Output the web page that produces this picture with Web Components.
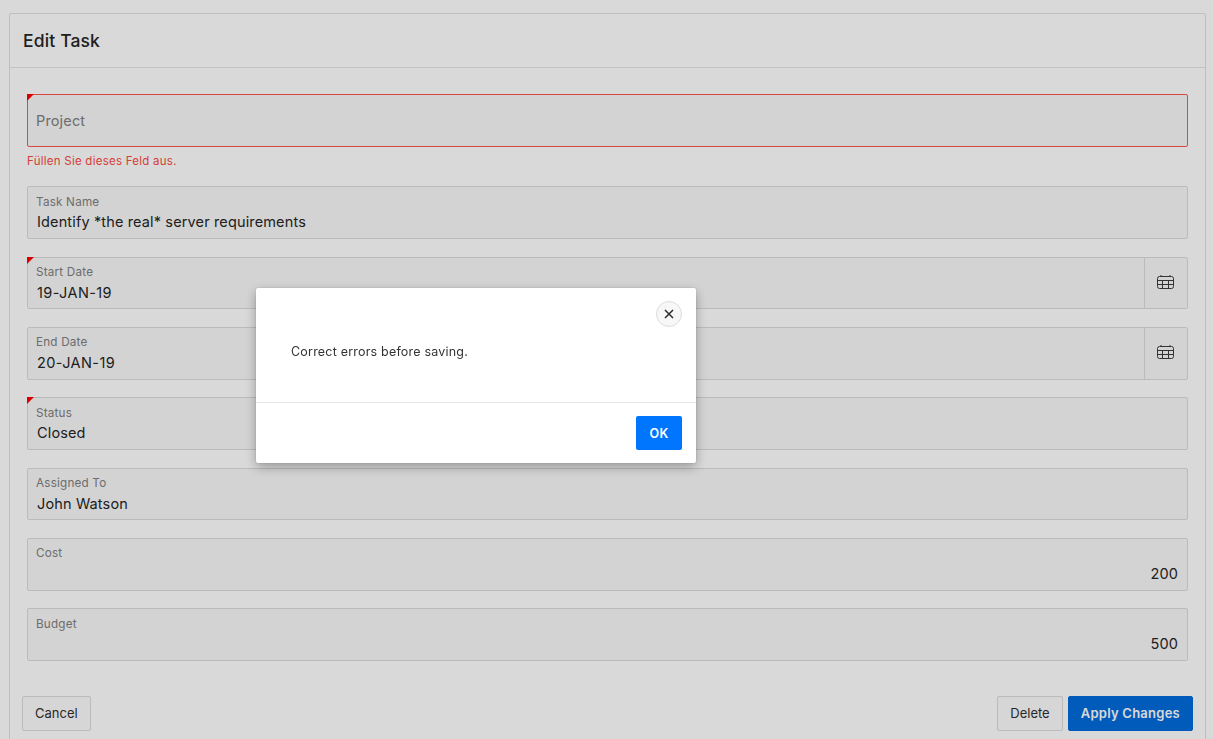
<!DOCTYPE html>
<html lang="en">
<head>
<meta charset="utf-8">
<title>Edit Task</title>
<style>
  html, body { margin: 0; height: 100%; overflow: hidden; }
  body { background: #fff; font-family: Inter, "Liberation Sans", sans-serif; color: #262626; }
</style>
</head>
<body>
<edit-task-page>
  <span slot="title">Edit Task</span>
  <task-field label="Project" error="Füllen Sie dieses Feld aus." required empty></task-field>
  <task-field label="Task Name" value="Identify *the real* server requirements"></task-field>
  <task-field label="Start Date" value="19-JAN-19" required calendar></task-field>
  <task-field label="End Date" value="20-JAN-19" calendar></task-field>
  <task-field label="Status" value="Closed" required></task-field>
  <task-field label="Assigned To" value="John Watson"></task-field>
  <task-field label="Cost" value="200" number></task-field>
  <task-field label="Budget" value="500" number></task-field>
  <task-button slot="left">Cancel</task-button>
  <task-button slot="right">Delete</task-button>
  <task-button slot="right" primary>Apply Changes</task-button>
</edit-task-page>
<alert-dialog>Correct errors before saving.</alert-dialog>

<script>
// page shell: card with header, field list and button row
const templatePage = document.createElement("template");
templatePage.innerHTML = `
<style>
  :host { display: block; padding: 13px 7px 0 9px; }
  .card { border: 1px solid #e1e1e1; border-radius: 2px; background: #fff; height: 800px; }
  h1 { margin: 0; padding: 0 13px; height: 53px; line-height: 53px; font-size: 17.5px; font-weight: 500; letter-spacing: .15px; color: #262626; border-bottom: 1px solid #e6e6e6; }
  .fields { display: flex; flex-direction: column; gap: 17.73px; padding: 26.4px 17px 0 17px; }
  .buttons { display: flex; justify-content: space-between; padding: 35px 12px 0 12px; }
  .group { display: flex; gap: 5px; }
</style>
<div class="card">
  <h1><slot name="title"></slot></h1>
  <div class="fields"><slot></slot></div>
  <div class="buttons">
    <div class="group"><slot name="left"></slot></div>
    <div class="group"><slot name="right"></slot></div>
  </div>
</div>`;

class EditTaskPage extends HTMLElement {
  constructor() {
    super();
    this.attachShadow({ mode: "open" });
    this.shadowRoot.appendChild(templatePage.content.cloneNode(true));
  }
}

// one labelled form field
const templateField = document.createElement("template");
templateField.innerHTML = `
<style>
  :host { display: block; }
  .box { position: relative; display: flex; height: 52.6px; box-sizing: border-box; border: 1px solid #dcdcdc; border-radius: 2px; background: #f8f8f8; }
  .main { flex: 1; min-width: 0; padding: 7.4px 9px 0 8px; }
  label { display: block; font-size: 11.7px; line-height: 14px; color: #808080; letter-spacing: .2px; }
  .value { font-size: 14.5px; line-height: 20px; margin-top: 3.6px; padding-left: 1px; color: #262626; letter-spacing: .14px; }
  .cal { display: none; width: 42px; border-left: 1px solid #dcdcdc; align-items: center; justify-content: center; }
  .cal svg { display: block; margin: -2px 0 0 -1px; }
  .mark { display: none; position: absolute; left: -1px; top: -1px; width: 0; height: 0; border-style: solid; border-width: 7px 7px 0 0; border-color: #ff0000 transparent transparent transparent; }
  .error { display: none; font-size: 11.5px; line-height: 14.67px; margin-top: 7px; color: #fa4a44; letter-spacing: .25px; }
  :host([required]) .mark { display: block; }
  :host([calendar]) .cal { display: flex; }
  :host([calendar]) .value { letter-spacing: .4px; }
  :host([number]) .value { text-align: right; }
  :host([empty]) .box { border-color: #ff554f; }
  :host([empty]) label { font-size: 14.5px; line-height: 20px; padding-top: 8.6px; letter-spacing: .15px; }
  :host([empty]) .value { display: none; }
  :host([error]) .error { display: block; }
</style>
<div class="box">
  <span class="mark"></span>
  <div class="main">
    <label></label>
    <div class="value"></div>
  </div>
  <div class="cal">
    <svg width="19" height="16" viewBox="0 0 19 16" fill="none" stroke="#3c3c3c" stroke-width="1">
      <rect x="1.5" y="2.5" width="16" height="12" rx="2"/>
      <path d="M1.5 6.5h16M1.5 10.5h16M6.5 6.5v8M12.5 6.5v8M5 1v2M14 1v2"/>
    </svg>
  </div>
</div>
<div class="error"></div>`;

class TaskField extends HTMLElement {
  constructor() {
    super();
    this.attachShadow({ mode: "open" });
    this.shadowRoot.appendChild(templateField.content.cloneNode(true));
  }

  connectedCallback() {
    this.shadowRoot.querySelector("label").textContent = this.getAttribute("label");
    this.shadowRoot.querySelector(".value").textContent = this.getAttribute("value") || "";
    this.shadowRoot.querySelector(".error").textContent = this.getAttribute("error") || "";
  }
}

// button, plain or primary
const templateButton = document.createElement("template");
templateButton.innerHTML = `
<style>
  :host { display: block; }
  button { display: block; height: 35px; padding: 0 12px; font: 400 13px Inter, "Liberation Sans", sans-serif; color: #303030; background: #fcfcfc; border: 1px solid #dcdcdc; border-radius: 2px; }
  :host([primary]) button { font-weight: 600; letter-spacing: .25px; color: #fff; background: #006bdc; border-color: #006bdc; }
</style>
<button><slot></slot></button>`;

class TaskButton extends HTMLElement {
  constructor() {
    super();
    this.attachShadow({ mode: "open" });
    this.shadowRoot.appendChild(templateButton.content.cloneNode(true));
  }
}

// modal with dim overlay
const templateDialog = document.createElement("template");
templateDialog.innerHTML = `
<style>
  :host { display: block; position: fixed; inset: 0; background: rgba(0,0,0,.15); }
  .dialog { position: absolute; left: 256px; top: 288px; width: 440px; height: 175px; box-sizing: border-box; display: flex; flex-direction: column; background: #fff; border-radius: 2px; box-shadow: 0 4px 12px rgba(0,0,0,.3), 0 0 2px rgba(0,0,0,.15); }
  .body { height: 115px; box-sizing: border-box; position: relative; padding: 56px 35px 0 35px; font-size: 12.5px; line-height: 16px; color: #333; letter-spacing: .2px; border-bottom: 1px solid #e6e6e6; }
  .close { position: absolute; top: 13px; right: 14px; width: 26px; height: 26px; box-sizing: border-box; display: flex; align-items: center; justify-content: center; padding: 0; background: #f7f7f7; border: 1px solid #dcdcdc; border-radius: 50%; }
  .footer { flex: 1; display: flex; justify-content: flex-end; align-items: flex-start; padding: 13px 14px 0 0; }
  .ok { width: 46px; height: 34px; padding: 0; font: 600 12.5px Inter, "Liberation Sans", sans-serif; color: #fff; background: #0076ff; border: 0; border-radius: 2px; letter-spacing: .2px; }
</style>
<div class="dialog">
  <div class="body">
    <button class="close" aria-label="Close">
      <svg width="10" height="10" viewBox="0 0 10 10" stroke="#2a2a2a" stroke-width="1.5" fill="none"><path d="M1 1l8 8M9 1l-8 8"/></svg>
    </button>
    <slot></slot>
  </div>
  <div class="footer"><button class="ok">OK</button></div>
</div>`;

class AlertDialog extends HTMLElement {
  constructor() {
    super();
    this.attachShadow({ mode: "open" });
    this.shadowRoot.appendChild(templateDialog.content.cloneNode(true));
  }
}

window.customElements.define("edit-task-page", EditTaskPage);
window.customElements.define("task-field", TaskField);
window.customElements.define("task-button", TaskButton);
window.customElements.define("alert-dialog", AlertDialog);
</script>
</body>
</html>
